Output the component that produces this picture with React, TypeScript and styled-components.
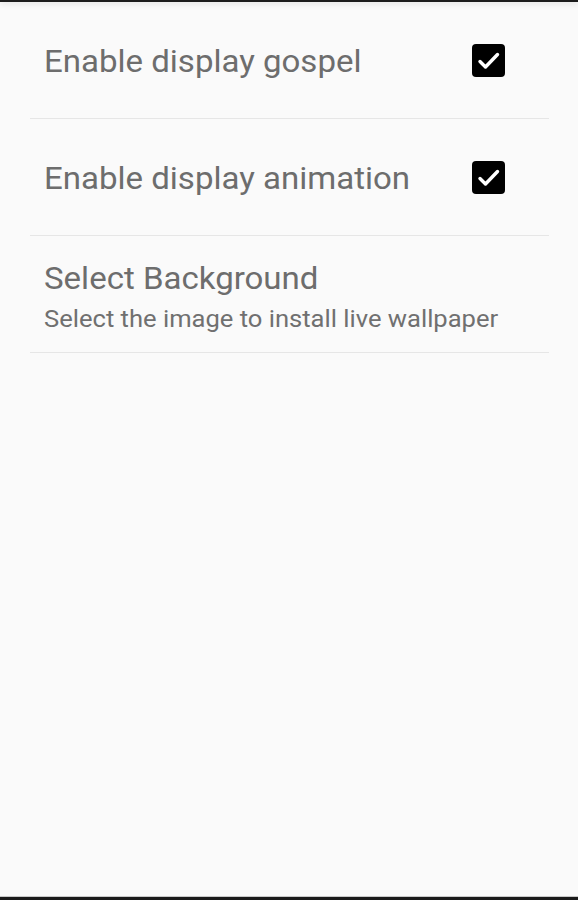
import styled, {createGlobalStyle} from "styled-components";

const GlobalStyle = createGlobalStyle`
  html, body {
    margin: 0;
    padding: 0;
    background: #fafafa;
  }
  body {
    font-family: Roboto, "Noto Sans", sans-serif;
  }
`;

interface IPref {
  title: string;
  summary?: string;
  checked?: boolean;
}

const prefs: IPref[] = [
  {title: 'Enable display gospel', checked: true},
  {title: 'Enable display animation', checked: true},
  {title: 'Select Background', summary: 'Select the image to install live wallpaper'},
];

const CheckBox = ({checked}: {checked: boolean}) => (
  <Box $checked={checked}>
    {checked && (
      <svg width="33" height="33" viewBox="0 0 33 33">
        <path d="M8 17.5 L13.5 23 L25.5 10.5" fill="none" stroke="#fff" strokeWidth="3.4" strokeLinecap="round" strokeLinejoin="round"/>
      </svg>
    )}
  </Box>
);

const App = () => {
  return (
    <Screen>
      <GlobalStyle/>
      <TopBar/>
      <List>
        {prefs.map((p) => (
          <Row key={p.title} $tall={!!p.summary}>
            <TextBlock $tall={!!p.summary}>
              <Title>{p.title}</Title>
              {p.summary && <Summary>{p.summary}</Summary>}
            </TextBlock>
            {p.checked !== undefined && <CheckBox checked={p.checked}/>}
          </Row>
        ))}
      </List>
      <Spacer/>
      <BottomBar/>
    </Screen>
  );
};

const Screen = styled.div`
  width: 578px;
  height: 900px;
  display: flex;
  flex-direction: column;
  background: #fafafa;
  overflow: hidden;
`;

const TopBar = styled.div`
  height: 2px;
  flex-shrink: 0;
  background: #1c1c1c;
  box-shadow: 0 1px 6px rgba(0, 0, 0, 0.22);
`;

const List = styled.div`
  display: flex;
  flex-direction: column;
  padding: 0 29px 0 30px;
`;

const Row = styled.div<{ $tall: boolean }>`
  height: 117px;
  display: flex;
  align-items: center;
  justify-content: space-between;
  padding: ${(p) => (p.$tall ? '6px 44px 0 14px' : '0 44px 0 14px')};
  border-bottom: 1px solid #e6e6e6;
  box-sizing: border-box;
`;

const TextBlock = styled.div<{ $tall: boolean }>`
  display: flex;
  flex-direction: column;
  padding-top: ${(p) => (p.$tall ? '0' : '3px')};
  transform: scaleX(1.065);
  transform-origin: left center;
`;

const Title = styled.div`
  font-size: 31px;
  line-height: 38px;
  color: #6d6d6d;
  white-space: nowrap;
`;

const Summary = styled.div`
  font-size: 24px;
  line-height: 32px;
  margin-top: 5px;
  color: #707070;
  white-space: nowrap;
`;

const Box = styled.div<{ $checked: boolean }>`
  width: 33px;
  height: 33px;
  border-radius: 4px;
  background: ${(p) => (p.$checked ? '#000' : 'transparent')};
  display: flex;
  align-items: center;
  justify-content: center;
`;

const Spacer = styled.div`
  flex: 1;
`;

const BottomBar = styled.div`
  height: 3px;
  flex-shrink: 0;
  background: #1a1a1a;
  border-top: 1px solid #c8c8c8;
`;

export default App;
